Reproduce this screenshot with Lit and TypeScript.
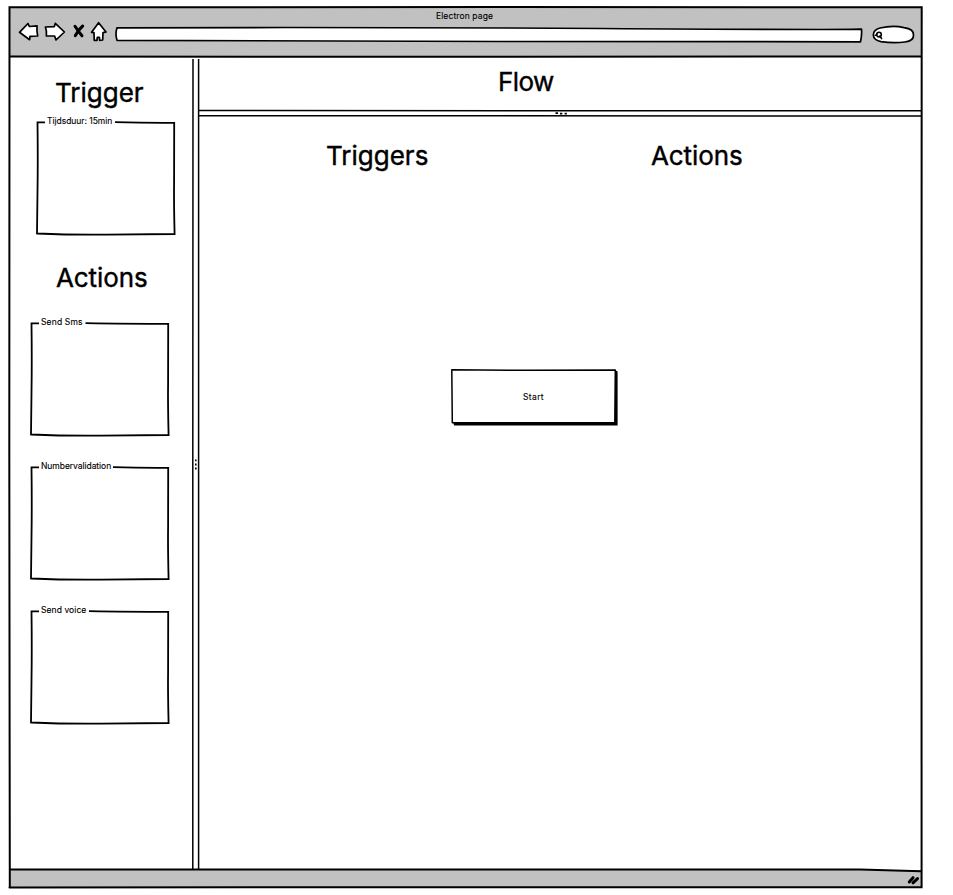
import { LitElement, html, css } from "lit";
import { customElement, property } from "lit/decorators.js";

@customElement("group-box")
class GroupBox extends LitElement {
  @property() label = "";
  @property({ type: Number }) gap = 50;

  static styles = css`
    :host { display: block; position: relative; width: 138px; height: 112px; }
    .outline { position: absolute; inset: 0; width: 138px; height: 112px; overflow: visible; }
    .line { fill: none; stroke: #000; stroke-width: 1.8; stroke-linejoin: miter; }
    .legend {
      position: absolute; left: 10px; top: -7px; white-space: nowrap;
      font: 8.5px/12px Inter, sans-serif; -webkit-text-stroke: 0.12px #000;
      letter-spacing: var(--track, 0.2px);
    }
  `;

  render() {
    return html`
      <svg class="outline" viewBox="0 0 138 112">
        <path class="line" d="M8 .3H.5Q1 40 .5 70L0 111.5Q35 113 70 112.6T137.6 112Q136.8 80 137.1 60L137.2 .8Q110 1 ${this.gap} .2"></path>
      </svg>
      <span class="legend">${this.label}</span>
    `;
  }
}

@customElement("app-root")
class AppRoot extends LitElement {
  static styles = css`
    :host {
      display: block; box-sizing: border-box; width: 953px; height: 895px;
      padding: 7px 0 0 9px; overflow: hidden; background: #fff; color: #000;
      font-family: Inter, sans-serif;
    }
    .window { position: relative; width: 913px; height: 881px; display: flex; flex-direction: column; }
    .frame { position: absolute; inset: 0; width: 913px; height: 881px; overflow: visible; pointer-events: none; }
    .ink { fill: none; stroke: #000; stroke-width: 2; }
    .header { height: 50px; background: #c1c1c1; flex: none; }
    .title {
      height: 17px; text-align: center; font-size: 8.5px; line-height: 18px;
      letter-spacing: 0.12px; padding-right: 2px; -webkit-text-stroke: 0.12px #000;
    }
    .tools { display: block; width: 913px; height: 33px; overflow: visible; }
    .shape { fill: #fff; stroke: #000; stroke-width: 1.7; stroke-linejoin: round; }
    .cross { fill: none; stroke: #000; stroke-width: 3; stroke-linecap: round; }
    .body { display: flex; height: 813px; flex: none; }
    .footer { height: 18px; background: #c1c1c1; flex: none; }
    .side { width: 183px; display: flex; flex-direction: column; }
    .vsplit { width: 7px; padding-top: 2px; box-sizing: border-box; }
    .vsplit svg { display: block; overflow: visible; }
    .main { flex: 1; display: flex; flex-direction: column; }
    .rule { fill: none; stroke: #000; stroke-width: 1.5; }
    .dot { fill: #000; }
    h1 {
      margin: 0; font-size: 26px; font-weight: 400; line-height: 32px; height: 32px;
      white-space: nowrap; -webkit-text-stroke: 0.4px #000;
    }
    .h-trigger { margin: 20px 0 0 46px; letter-spacing: 0; }
    .h-actions { margin: 28px 0 0 47px; letter-spacing: -0.1px; }
    .side group-box { flex: none; margin-left: 22px; }
    .side .first { margin: 13px 0 0 28px; --track: -0.03px; }
    .side .sms { margin-top: 29px; --track: 0.15px; }
    .side .number { margin-top: 31.5px; --track: -0.05px; }
    .side .voice { margin-top: 32.5px; --track: 0.08px; }
    .flow { height: 53px; padding: 9px 0 0 299px; box-sizing: border-box; letter-spacing: -0.6px; }
    .hsplit { display: block; height: 7px; overflow: visible; }
    .columns { display: flex; padding-top: 23px; margin-bottom: -2px; }
    .h-triggers { width: 325px; padding-left: 127px; box-sizing: border-box; letter-spacing: 0; }
    .h-col { padding-left: 127px; letter-spacing: -0.1px; }
    .start {
      position: relative; width: 163px; height: 53px; margin: 200px 0 0 253px;
      display: flex; align-items: center; justify-content: center;
      font-size: 8.5px; line-height: 12px; letter-spacing: 0.35px;
    }
    .start svg { position: absolute; inset: 0; overflow: visible; }
    .start span { position: relative; -webkit-text-stroke: 0.12px #000; }
    .card { fill: #fff; stroke: #000; stroke-width: 1.5; stroke-linejoin: round; }
    .glass { fill: none; stroke: #000; stroke-width: 1.6; stroke-linecap: round; }
  `;

  render() {
    return html`
      <div class="window">
        <div class="header">
          <div class="title">Electron page</div>
          <svg class="tools" viewBox="9 24 913 33">
            <path class="shape" d="M19.5 32.3L28 23.5L29.3 26.5L37 25.8Q36.6 31 37.7 36L30 36.4L29.6 39.7Z"></path>
            <path class="shape" d="M45.4 27L54.3 26.6L55.3 23.4L64.4 32L56 40L54.6 36L46.4 36Q47 31 45.4 27Z"></path>
            <path class="cross" d="M75 26.3Q78 31 82 35.8M82.7 26Q78 30 75.3 35.7"></path>
            <path class="shape" d="M98.6 22.7L106 32L103 32.7L102.7 40L99.7 40.4L99.4 37.3H97.3L97 40.4L94.2 40.3L94 32.7L91.6 32.3Z"></path>
            <path class="shape" d="M117 27.8Q360 27 600 28.5T861.5 29.2Q862 35 860.5 41.8Q700 42.3 500 41.5T117 40.3Q115 34 117 27.8Z"></path>
            <path class="shape" d="M873.3 35Q873.2 30 880 28Q893 25 904 27.6Q914 29 913.5 35Q914 41 905 42Q893 43.5 881 41.6Q873.6 40 873.3 35Z"></path>
            <circle cx="879" cy="34.6" r="2.3" class="glass"></circle>
            <path class="glass" d="M880 36L881.6 38.6M875.3 35.3L876.8 35"></path>
          </svg>
        </div>
        <div class="body">
          <div class="side">
            <h1 class="h-trigger">Trigger</h1>
            <group-box class="first" label="Tijdsduur: 15min" gap="78"></group-box>
            <h1 class="h-actions">Actions</h1>
            <group-box class="sms" label="Send Sms" gap="54.5"></group-box>
            <group-box class="number" label="Numbervalidation" gap="82"></group-box>
            <group-box class="voice" label="Send voice" gap="58"></group-box>
          </div>
          <div class="vsplit">
            <svg width="7" height="811" viewBox="192 59 7 811">
              <path class="rule" d="M193 59Q192.4 300 192.8 500V870M198.6 59V870"></path>
              <path class="dot" d="M195 459.5h1.6v1.8h-1.6zM195 463.6h1.6v1.8h-1.6zM195 467.6h1.6v1.8h-1.6z"></path>
            </svg>
          </div>
          <div class="main">
            <h1 class="flow">Flow</h1>
            <svg class="hsplit" width="723" height="7" viewBox="199 110 723 7">
              <path class="rule" d="M199 110.5Q500 109.8 922 110.8M199 115.7Q500 116.4 922 116"></path>
              <path class="dot" d="M555.5 112.3h2.5v1.7h-2.5zM560 112.8h2.3v1.7h-2.3zM564.6 112.8h2.2v1.7h-2.2z"></path>
            </svg>
            <div class="columns">
              <h1 class="h-triggers">Triggers</h1>
              <h1 class="h-col">Actions</h1>
            </div>
            <div class="start">
              <svg width="163" height="53" viewBox="452 370 163 53">
                <path class="dot" d="M453.5 423L454 425.6H617.6V371.5L615 370V423Z"></path>
                <path class="card" d="M451.8 369.7L530 370.3L615.3 370L614.8 422.8H452.3Z"></path>
              </svg>
              <span>Start</span>
            </div>
          </div>
        </div>
        <div class="footer"></div>
        <svg class="frame" viewBox="9 7 913 881">
          <path class="ink" d="M9.5 7.3L500 7.1L921.7 7.3Q921 200 921.5 450T921.6 887.3Q500 887 250 887.2T9.8 887.5Q9.5 700 9.3 450T9.5 7.3Z"></path>
          <path class="ink" d="M10 56.5Q250 57.5 500 56.8T921 56.5M10 869.6Q400 870 860 869.4L921 871.3"></path>
          <path class="cross" d="M909.3 882L913 877.7M913 882.8L917.5 878.6"></path>
        </svg>
      </div>
    `;
  }
}
